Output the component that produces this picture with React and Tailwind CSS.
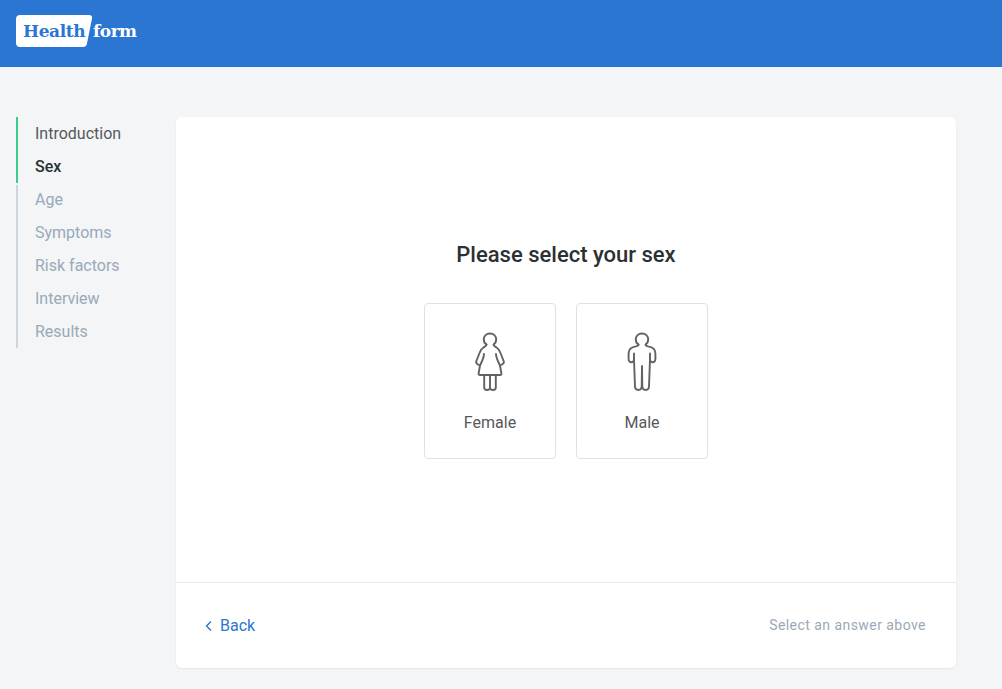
const font = { fontFamily: '"Roboto", sans-serif' };

function Female() {
  return (
    <svg width="30" height="60" viewBox="0 0 30 60" fill="none" stroke="#5f6365" strokeWidth="1.9" strokeLinecap="round" strokeLinejoin="round">
      <path d="M11.5 12.5C10 11.5 8.8 9.6 8.8 7.4C8.8 4 11.5 1.5 15 1.5C18.5 1.5 21.2 4 21.2 7.4C21.2 9.6 20 11.5 18.5 12.5C18.5 14 20 14.5 21.5 15.5C24 17 25 19 25.5 21L28.8 29.5C29.2 31 28.5 31.8 27 32.5L25 33.5" />
      <path d="M11.5 12.5C11.5 14 10 14.5 8.5 15.5C6 17 5 19 4.5 21L1.2 29.5C0.8 31 1.5 31.8 3 32.5L5 33.5" />
      <path d="M9 22C9 26 6.5 30 5 33.5L3.6 41.5C3.4 42.6 3.8 43 5 43H25C26.2 43 26.6 42.6 26.4 41.5L25 33.5C23.5 30 21 26 21 22" />
      <path d="M9.2 43V55.5C9.2 57.2 10.2 58 12 58C13.8 58 15 57.2 15 55.5V43M15 55.5C15 57.2 16.2 58 18 58C19.8 58 20.8 57.2 20.8 55.5V43" />
    </svg>
  );
}

function Male() {
  return (
    <svg width="30" height="60" viewBox="0 0 30 60" fill="none" stroke="#5f6365" strokeWidth="1.9" strokeLinecap="round" strokeLinejoin="round">
      <path d="M11.5 12.5C10 11.5 8.8 9.6 8.8 7.4C8.8 4 11.5 1.5 15 1.5C18.5 1.5 21.2 4 21.2 7.4C21.2 9.6 20 11.5 18.5 12.5C18.5 13.6 19.5 14 21 14.4C25.5 15 28.4 17.5 28.4 21.5V27C28.4 29.2 27 30.4 25.4 30.2C24 30 23 29 23 27.5V21.5" />
      <path d="M11.5 12.5C11.5 13.6 10.5 14 9 14.4C4.5 15 1.6 17.5 1.6 21.5V27C1.6 29.2 3 30.4 4.6 30.2C6 30 7 29 7 27.5V21.5" />
      <path d="M7 27.5L8 54.8C8.1 57 9.5 58 11.4 58C13.3 58 14.6 57 14.7 54.8L15 34L15.3 54.8C15.4 57 16.7 58 18.6 58C20.5 58 21.9 57 22 54.8L23 27.5" />
    </svg>
  );
}

function Option({ label, children }) {
  return (
    <button className="flex h-[156px] w-[132px] flex-col items-center rounded border border-[#dde2e7] bg-white pt-[28px] text-[16px] text-[#55595b]">
      {children}
      <span className="mt-[19px] leading-[24px]">{label}</span>
    </button>
  );
}

export default function App() {
  return (
    <div className="min-h-[689px] bg-[#f3f5f7]" style={font}>
      <header className="flex h-[67px] items-start bg-[#2a76d2] pl-4 pt-[15px]">
        <div className="flex items-center" style={{ fontFamily: '"DejaVu Serif", serif' }}>
          <svg width="78" height="32" viewBox="0 0 78 32" className="block">
            <path d="M4 0H73C75.5 0 76.5 1.5 76 3.5L71 28.5C70.6 30.6 69.5 32 67 32H4C1.5 32 0 30.5 0 28V4C0 1.5 1.5 0 4 0Z" fill="#fff" />
          </svg>
          <span className="ml-[-71px] w-[69px] whitespace-nowrap text-[17px] font-bold leading-[32px] tracking-[-0.4px] text-[#2a76d2]">Health</span>
          <span className="ml-[1px] whitespace-nowrap text-[17px] font-bold leading-[32px] tracking-[-0.5px] text-white">form</span>
        </div>
      </header>
      <main className="flex items-start pl-4 pt-[50px]">
        <nav className="w-[160px] text-[16px] leading-[33px]">
          <div className="border-l-2 border-[#3ec98e] pl-[17px]">
            <div className="text-[#55595b]">Introduction</div>
            <div className="font-medium text-[#2b3133]">Sex</div>
          </div>
          <div className="flex">
            <div className="mt-[2px] w-[2px] bg-[#ccd4dc]" />
            <div className="pl-[17px] text-[#9aa9b8]">
              <div>Age</div>
              <div>Symptoms</div>
              <div>Risk factors</div>
              <div>Interview</div>
              <div>Results</div>
            </div>
          </div>
        </nav>
        <section className="flex h-[551px] w-[780px] flex-col rounded-md bg-white shadow-[0_1px_2px_rgba(30,50,80,0.08)]">
          <div className="flex h-[466px] flex-col items-center border-b border-[#e8ebee] pt-[122px]">
            <h1 className="text-[22px] font-medium leading-[32px] text-[#2b3133]">Please select your sex</h1>
            <div className="mt-[32px] flex gap-5">
              <Option label="Female"><Female /></Option>
              <Option label="Male"><Male /></Option>
            </div>
          </div>
          <div className="flex flex-1 items-center justify-between pl-[29px] pr-[30px]">
            <div className="flex items-center gap-[8px] text-[16px] text-[#2a76d2]">
              <svg width="7" height="10" viewBox="0 0 7 10" fill="none" stroke="#2a76d2" strokeWidth="1.5" strokeLinecap="round" strokeLinejoin="round">
                <path d="M5.5 1L1.5 5L5.5 9" />
              </svg>
              <span>Back</span>
            </div>
            <span className="text-[14px] tracking-[0.45px] text-[#9aa9b8]">Select an answer above</span>
          </div>
        </section>
      </main>
    </div>
  );
}
